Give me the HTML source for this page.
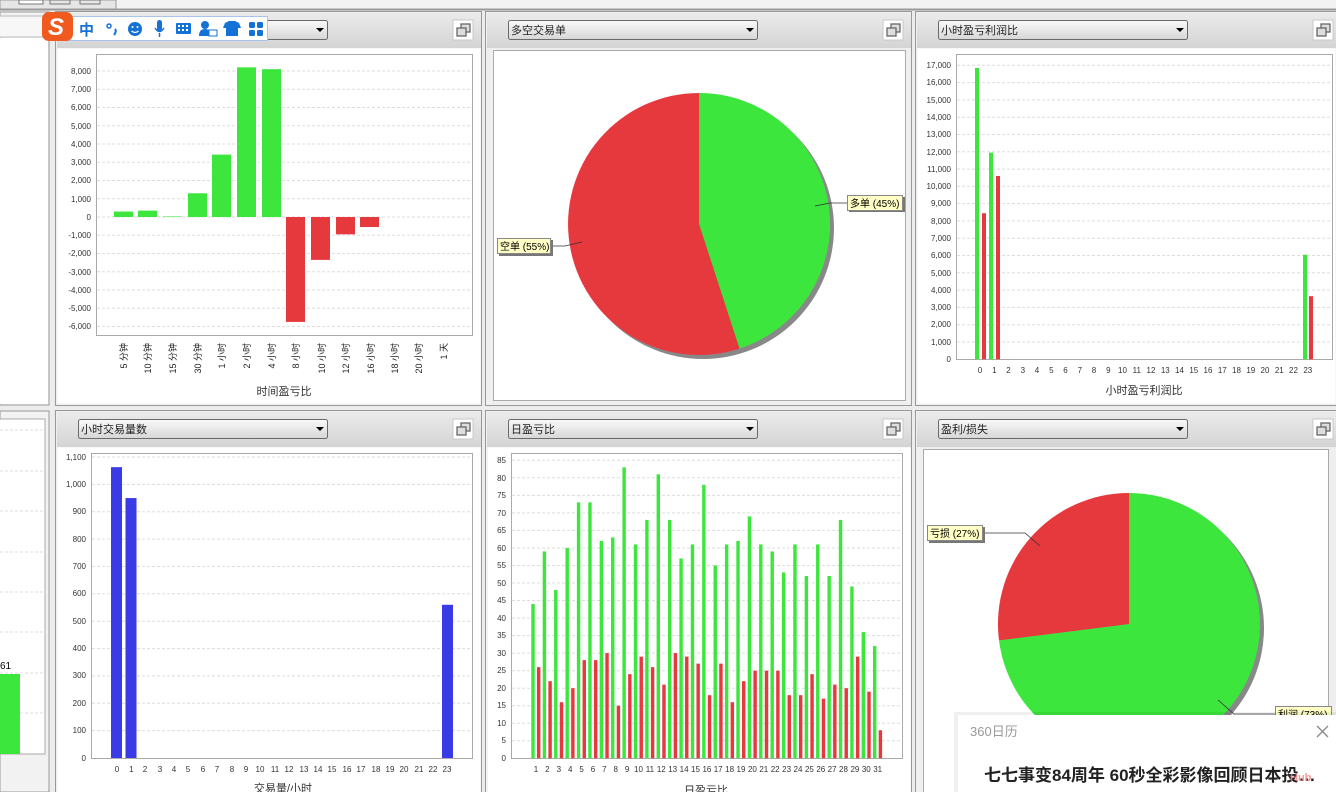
<!DOCTYPE html>
<html><head><meta charset="utf-8"><style>
html,body{margin:0;padding:0;width:1336px;height:792px;overflow:hidden;background:#ececec;}
svg{display:block;font-family:"Liberation Sans","Noto Sans CJK SC",sans-serif;}
</style></head><body>
<svg width="1336" height="792" viewBox="0 0 1336 792" xmlns="http://www.w3.org/2000/svg">
<defs>
<linearGradient id="hdr" x1="0" y1="0" x2="0" y2="1"><stop offset="0" stop-color="#ebebeb"/><stop offset="1" stop-color="#d4d4d4"/></linearGradient>
<linearGradient id="dd" x1="0" y1="0" x2="0" y2="1"><stop offset="0" stop-color="#fafafa"/><stop offset="1" stop-color="#d6d6d6"/></linearGradient>
<g id="restore"><rect x="0" y="0" width="20" height="20" fill="#fff" stroke="#c8c8c8"/><rect x="8" y="4" width="9" height="8" fill="#ddd" stroke="#666" stroke-width="1.3"/><rect x="4" y="8" width="9" height="8" fill="#ddd" stroke="#666" stroke-width="1.3"/></g>
</defs>
<!-- top strip -->
<rect x="0" y="0" width="1336" height="9" fill="#f2f2f2"/>
<rect x="0" y="0" width="116" height="9" fill="#e6e6e6" stroke="#999"/>
<rect x="19" y="0" width="24" height="4" fill="#fff" stroke="#777"/><rect x="50" y="0" width="20" height="4" fill="none" stroke="#777"/><rect x="80" y="0" width="20" height="4" fill="none" stroke="#777"/>
<line x1="0" y1="9.5" x2="1336" y2="9.5" stroke="#999" stroke-width="2"/>

<!-- left partial top -->
<rect x="0" y="12" width="49" height="393" fill="#f2f2f2" stroke="#999"/>
<rect x="-1" y="16" width="46" height="21" fill="#f7f7f7" stroke="#bbb"/>
<rect x="0" y="38" width="48" height="366" fill="#fff"/>
<!-- left partial bottom -->
<rect x="0" y="411" width="49" height="381" fill="#f2f2f2" stroke="#999"/>
<rect x="-1" y="419" width="46" height="335" fill="#fff" stroke="#aaa"/>
<g stroke="#ddd" stroke-dasharray="3,2"><line x1="0" y1="430" x2="45" y2="430"/><line x1="0" y1="471" x2="45" y2="471"/><line x1="0" y1="511" x2="45" y2="511"/><line x1="0" y1="552" x2="45" y2="552"/><line x1="0" y1="592" x2="45" y2="592"/><line x1="0" y1="632" x2="45" y2="632"/><line x1="0" y1="673" x2="45" y2="673"/><line x1="0" y1="713" x2="45" y2="713"/></g>
<rect x="0" y="674" width="20" height="80" fill="#3de63d"/>
<text x="0" y="669" font-size="10" fill="#000">61</text>

<!-- panel frames -->
<g fill="#efefef" stroke="#999">
<rect x="55.5" y="11.5" width="426" height="394"/><rect x="485.5" y="11.5" width="426" height="394"/><rect x="915.5" y="11.5" width="430" height="394"/>
<rect x="55.5" y="410.5" width="426" height="390"/><rect x="485.5" y="410.5" width="426" height="390"/><rect x="915.5" y="410.5" width="430" height="390"/>
</g>
<g fill="url(#hdr)">
<rect x="57" y="13" width="424" height="35"/><rect x="487" y="13" width="424" height="35"/><rect x="917" y="13" width="419" height="35"/>
<rect x="57" y="412" width="424" height="35"/><rect x="487" y="412" width="424" height="35"/><rect x="917" y="412" width="419" height="35"/>
</g>
<g stroke="#6a6a6a" fill="url(#dd)">
<rect x="78.5" y="20.5" width="249" height="19" rx="2"/><rect x="508.5" y="20.5" width="249" height="19" rx="2"/><rect x="938.5" y="20.5" width="249" height="19" rx="2"/>
<rect x="78.5" y="419.5" width="249" height="19" rx="2"/><rect x="508.5" y="419.5" width="249" height="19" rx="2"/><rect x="938.5" y="419.5" width="249" height="19" rx="2"/>
</g>
<g fill="#000"><path d="M316 28h8l-4 4z"/><path d="M746 28h8l-4 4z"/><path d="M1176 28h8l-4 4z"/><path d="M316 427h8l-4 4z"/><path d="M746 427h8l-4 4z"/><path d="M1176 427h8l-4 4z"/></g>
<g font-size="11" fill="#222"><text x="511" y="34">多空交易单</text><text x="941" y="34">小时盈亏利润比</text><text x="81" y="433">小时交易量数</text><text x="511" y="433">日盈亏比</text><text x="941" y="433">盈利/损失</text></g>
<use href="#restore" x="453" y="20"/><use href="#restore" x="883" y="20"/><use href="#restore" x="1313" y="20"/>
<use href="#restore" x="453" y="419"/><use href="#restore" x="883" y="419"/><use href="#restore" x="1313" y="419"/>

<!-- chart white areas -->
<g fill="#fff" stroke="#aaa">
<rect x="57.5" y="48.5" width="423" height="355" stroke="none"/>
<rect x="493.5" y="50.5" width="412" height="350"/>
<rect x="917.5" y="48.5" width="418" height="355" stroke="none"/>
<rect x="57.5" y="447.5" width="423" height="345" stroke="none"/>
<rect x="487.5" y="447.5" width="423" height="345" stroke="none"/>
<rect x="923.5" y="449.5" width="405" height="345"/>
</g>

<!-- PANEL 1 -->
<rect x="96.5" y="54.5" width="376" height="281" fill="#fff" stroke="#aaa"/>
<g stroke="#ddd" stroke-dasharray="3,2">
<line x1="97" y1="71" x2="472" y2="71"/><line x1="97" y1="89.25" x2="472" y2="89.25"/><line x1="97" y1="107.5" x2="472" y2="107.5"/><line x1="97" y1="125.75" x2="472" y2="125.75"/><line x1="97" y1="144" x2="472" y2="144"/><line x1="97" y1="162.25" x2="472" y2="162.25"/><line x1="97" y1="180.5" x2="472" y2="180.5"/><line x1="97" y1="198.75" x2="472" y2="198.75"/><line x1="97" y1="217" x2="472" y2="217"/><line x1="97" y1="235.25" x2="472" y2="235.25"/><line x1="97" y1="253.5" x2="472" y2="253.5"/><line x1="97" y1="271.75" x2="472" y2="271.75"/><line x1="97" y1="290" x2="472" y2="290"/><line x1="97" y1="308.25" x2="472" y2="308.25"/><line x1="97" y1="326.5" x2="472" y2="326.5"/>
</g>
<g font-size="8" fill="#333" text-anchor="end">
<text x="91" y="74">8,000</text><text x="91" y="92">7,000</text><text x="91" y="110">6,000</text><text x="91" y="129">5,000</text><text x="91" y="147">4,000</text><text x="91" y="165">3,000</text><text x="91" y="183">2,000</text><text x="91" y="202">1,000</text><text x="91" y="220">0</text><text x="91" y="238">-1,000</text><text x="91" y="256">-2,000</text><text x="91" y="275">-3,000</text><text x="91" y="293">-4,000</text><text x="91" y="311">-5,000</text><text x="91" y="329">-6,000</text>
</g>
<g transform="translate(0,217) scale(1,-0.01825)">
<g fill="#3de63d"><rect x="114" y="0" width="19" height="300"/><rect x="138" y="0" width="19" height="350"/><rect x="163" y="0" width="19" height="30"/><rect x="188" y="0" width="19" height="1300"/><rect x="212" y="0" width="19" height="3420"/><rect x="237" y="0" width="19" height="8200"/><rect x="262" y="0" width="19" height="8100"/></g>
<g fill="#e6393d"><rect x="286" y="-5750" width="19" height="5750"/><rect x="311" y="-2350" width="19" height="2350"/><rect x="336" y="-950" width="19" height="950"/><rect x="360" y="-550" width="19" height="550"/></g>
</g>
<g font-size="9" fill="#222" text-anchor="end">
<text transform="translate(127,343) rotate(-90)">5 分钟</text><text transform="translate(151,343) rotate(-90)">10 分钟</text><text transform="translate(176,343) rotate(-90)">15 分钟</text><text transform="translate(201,343) rotate(-90)">30 分钟</text><text transform="translate(225,343) rotate(-90)">1 小时</text><text transform="translate(250,343) rotate(-90)">2 小时</text><text transform="translate(275,343) rotate(-90)">4 小时</text><text transform="translate(299,343) rotate(-90)">8 小时</text><text transform="translate(325,343) rotate(-90)">10 小时</text><text transform="translate(349,343) rotate(-90)">12 小时</text><text transform="translate(374,343) rotate(-90)">16 小时</text><text transform="translate(398,343) rotate(-90)">18 小时</text><text transform="translate(422,343) rotate(-90)">20 小时</text><text transform="translate(447,343) rotate(-90)">1 天</text>
</g>
<text x="284" y="395" font-size="11" fill="#333" text-anchor="middle">时间盈亏比</text>

<!-- PANEL 2 pie -->
<circle cx="703" cy="228" r="131" fill="#888"/>
<path d="M699 224 L699 93 A131 131 0 0 1 739.5 348.6 Z" fill="#3de63d"/>
<path d="M699 224 L739.5 348.6 A131 131 0 1 1 699 93 Z" fill="#e6393d"/>
<polyline points="815,206 830,203 847,203" fill="none" stroke="#333" stroke-width="0.8"/>
<polyline points="582,242 565,246 551,246" fill="none" stroke="#333" stroke-width="0.8"/>
<rect x="849" y="197" width="56" height="15" fill="#777"/><rect x="847.5" y="195.5" width="55" height="15" fill="#ffffc6" stroke="#888"/>
<text x="850" y="207" font-size="10" fill="#000">多单 (45%)</text>
<rect x="499" y="240" width="54" height="16" fill="#777"/><rect x="497.5" y="238.5" width="53" height="15" fill="#ffffc6" stroke="#888"/>
<text x="500" y="250" font-size="10" fill="#000">空单 (55%)</text>

<!-- PANEL 3 -->
<rect x="956.5" y="54.5" width="376" height="305" fill="#fff" stroke="#aaa"/>
<g stroke="#ddd" stroke-dasharray="3,2">
<line x1="957" y1="65.3" x2="1330" y2="65.3"/><line x1="957" y1="82.6" x2="1330" y2="82.6"/><line x1="957" y1="99.9" x2="1330" y2="99.9"/><line x1="957" y1="117.2" x2="1330" y2="117.2"/><line x1="957" y1="134.5" x2="1330" y2="134.5"/><line x1="957" y1="151.8" x2="1330" y2="151.8"/><line x1="957" y1="169.1" x2="1330" y2="169.1"/><line x1="957" y1="186.3" x2="1330" y2="186.3"/><line x1="957" y1="203.6" x2="1330" y2="203.6"/><line x1="957" y1="220.9" x2="1330" y2="220.9"/><line x1="957" y1="238.2" x2="1330" y2="238.2"/><line x1="957" y1="255.5" x2="1330" y2="255.5"/><line x1="957" y1="272.8" x2="1330" y2="272.8"/><line x1="957" y1="290.1" x2="1330" y2="290.1"/><line x1="957" y1="307.4" x2="1330" y2="307.4"/><line x1="957" y1="324.7" x2="1330" y2="324.7"/><line x1="957" y1="342" x2="1330" y2="342"/>
</g>
<g font-size="8" fill="#333" text-anchor="end">
<text x="951" y="68">17,000</text><text x="951" y="85">16,000</text><text x="951" y="103">15,000</text><text x="951" y="120">14,000</text><text x="951" y="137">13,000</text><text x="951" y="155">12,000</text><text x="951" y="172">11,000</text><text x="951" y="189">10,000</text><text x="951" y="206">9,000</text><text x="951" y="224">8,000</text><text x="951" y="241">7,000</text><text x="951" y="258">6,000</text><text x="951" y="276">5,000</text><text x="951" y="293">4,000</text><text x="951" y="310">3,000</text><text x="951" y="327">2,000</text><text x="951" y="345">1,000</text><text x="951" y="362">0</text>
</g>
<g transform="translate(0,359.3) scale(1,-0.01729)">
<g fill="#3de63d"><rect x="975" y="0" width="4" height="16850"/><rect x="989" y="0" width="4" height="11950"/><rect x="1303" y="0" width="4" height="6050"/></g>
<g fill="#e6393d"><rect x="982" y="0" width="4" height="8450"/><rect x="996" y="0" width="4" height="10600"/><rect x="1309" y="0" width="4" height="3650"/></g>
</g>
<g font-size="8" fill="#333" text-anchor="middle">
<text x="980" y="373">0</text><text x="994.3" y="373">1</text><text x="1008.5" y="373">2</text><text x="1022.8" y="373">3</text><text x="1037" y="373">4</text><text x="1051.3" y="373">5</text><text x="1065.5" y="373">6</text><text x="1079.8" y="373">7</text><text x="1094" y="373">8</text><text x="1108.3" y="373">9</text><text x="1122.5" y="373">10</text><text x="1136.8" y="373">11</text><text x="1151" y="373">12</text><text x="1165.3" y="373">13</text><text x="1179.5" y="373">14</text><text x="1193.8" y="373">15</text><text x="1208" y="373">16</text><text x="1222.3" y="373">17</text><text x="1236.5" y="373">18</text><text x="1250.8" y="373">19</text><text x="1265" y="373">20</text><text x="1279.3" y="373">21</text><text x="1293.5" y="373">22</text><text x="1307.8" y="373">23</text>
</g>
<text x="1144" y="394" font-size="11" fill="#333" text-anchor="middle">小时盈亏利润比</text>

<!-- BOTTOM PANEL 1 -->
<rect x="91.5" y="453.5" width="381" height="305" fill="#fff" stroke="#aaa"/>
<g stroke="#ddd" stroke-dasharray="3,2">
<line x1="92" y1="457" x2="472" y2="457"/><line x1="92" y1="484.4" x2="472" y2="484.4"/><line x1="92" y1="511.8" x2="472" y2="511.8"/><line x1="92" y1="539.1" x2="472" y2="539.1"/><line x1="92" y1="566.5" x2="472" y2="566.5"/><line x1="92" y1="593.8" x2="472" y2="593.8"/><line x1="92" y1="621.2" x2="472" y2="621.2"/><line x1="92" y1="648.6" x2="472" y2="648.6"/><line x1="92" y1="675.9" x2="472" y2="675.9"/><line x1="92" y1="703.3" x2="472" y2="703.3"/><line x1="92" y1="730.6" x2="472" y2="730.6"/>
</g>
<g font-size="8" fill="#333" text-anchor="end">
<text x="86" y="460">1,100</text><text x="86" y="487">1,000</text><text x="86" y="514">900</text><text x="86" y="542">800</text><text x="86" y="569">700</text><text x="86" y="596">600</text><text x="86" y="624">500</text><text x="86" y="651">400</text><text x="86" y="678">300</text><text x="86" y="706">200</text><text x="86" y="733">100</text><text x="86" y="761">0</text>
</g>
<g transform="translate(0,758) scale(1,-0.2736)" fill="#3a3ae6">
<rect x="111" y="0" width="11" height="1063"/><rect x="125.5" y="0" width="11" height="950"/><rect x="442" y="0" width="11" height="560"/>
</g>
<g font-size="8" fill="#333" text-anchor="middle">
<text x="117" y="772">0</text><text x="131.3" y="772">1</text><text x="145" y="772">2</text><text x="160" y="772">3</text><text x="174" y="772">4</text><text x="188" y="772">5</text><text x="203" y="772">6</text><text x="217" y="772">7</text><text x="232" y="772">8</text><text x="246" y="772">9</text><text x="260" y="772">10</text><text x="275" y="772">11</text><text x="289" y="772">12</text><text x="304" y="772">13</text><text x="318" y="772">14</text><text x="332" y="772">15</text><text x="347" y="772">16</text><text x="361" y="772">17</text><text x="376" y="772">18</text><text x="390" y="772">19</text><text x="404" y="772">20</text><text x="419" y="772">21</text><text x="433" y="772">22</text><text x="447" y="772">23</text>
</g>
<text x="283" y="792" font-size="11" fill="#333" text-anchor="middle">交易量/小时</text>

<!-- BOTTOM PANEL 2 -->
<rect x="511.5" y="453.5" width="391" height="305" fill="#fff" stroke="#aaa"/>
<g stroke="#ddd" stroke-dasharray="3,2">
<line x1="512" y1="460.3" x2="902" y2="460.3"/><line x1="512" y1="477.8" x2="902" y2="477.8"/><line x1="512" y1="495.4" x2="902" y2="495.4"/><line x1="512" y1="512.9" x2="902" y2="512.9"/><line x1="512" y1="530.4" x2="902" y2="530.4"/><line x1="512" y1="548" x2="902" y2="548"/><line x1="512" y1="565.5" x2="902" y2="565.5"/><line x1="512" y1="583" x2="902" y2="583"/><line x1="512" y1="600.5" x2="902" y2="600.5"/><line x1="512" y1="618.1" x2="902" y2="618.1"/><line x1="512" y1="635.6" x2="902" y2="635.6"/><line x1="512" y1="653.1" x2="902" y2="653.1"/><line x1="512" y1="670.7" x2="902" y2="670.7"/><line x1="512" y1="688.2" x2="902" y2="688.2"/><line x1="512" y1="705.7" x2="902" y2="705.7"/><line x1="512" y1="723.2" x2="902" y2="723.2"/><line x1="512" y1="740.8" x2="902" y2="740.8"/>
</g>
<g font-size="8" fill="#333" text-anchor="end">
<text x="506" y="463">85</text><text x="506" y="481">80</text><text x="506" y="498">75</text><text x="506" y="516">70</text><text x="506" y="533">65</text><text x="506" y="551">60</text><text x="506" y="568">55</text><text x="506" y="586">50</text><text x="506" y="603">45</text><text x="506" y="621">40</text><text x="506" y="638">35</text><text x="506" y="656">30</text><text x="506" y="673">25</text><text x="506" y="691">20</text><text x="506" y="708">15</text><text x="506" y="726">10</text><text x="506" y="743">5</text><text x="506" y="761">0</text>
</g>
<g transform="translate(531.3,758.3) scale(11.39,-3.506)">
<g fill="#3de63d">
<rect x="0" y="0" width=".3" height="44"/><rect x="1" y="0" width=".3" height="59"/><rect x="2" y="0" width=".3" height="48"/><rect x="3" y="0" width=".3" height="60"/><rect x="4" y="0" width=".3" height="73"/><rect x="5" y="0" width=".3" height="73"/><rect x="6" y="0" width=".3" height="62"/><rect x="7" y="0" width=".3" height="63"/><rect x="8" y="0" width=".3" height="83"/><rect x="9" y="0" width=".3" height="61"/><rect x="10" y="0" width=".3" height="68"/><rect x="11" y="0" width=".3" height="81"/><rect x="12" y="0" width=".3" height="68"/><rect x="13" y="0" width=".3" height="57"/><rect x="14" y="0" width=".3" height="61"/><rect x="15" y="0" width=".3" height="78"/><rect x="16" y="0" width=".3" height="55"/><rect x="17" y="0" width=".3" height="61"/><rect x="18" y="0" width=".3" height="62"/><rect x="19" y="0" width=".3" height="69"/><rect x="20" y="0" width=".3" height="61"/><rect x="21" y="0" width=".3" height="59"/><rect x="22" y="0" width=".3" height="53"/><rect x="23" y="0" width=".3" height="61"/><rect x="24" y="0" width=".3" height="52"/><rect x="25" y="0" width=".3" height="61"/><rect x="26" y="0" width=".3" height="52"/><rect x="27" y="0" width=".3" height="68"/><rect x="28" y="0" width=".3" height="49"/><rect x="29" y="0" width=".3" height="36"/><rect x="30" y="0" width=".3" height="32"/>
</g>
<g fill="#e6393d">
<rect x=".5" y="0" width=".3" height="26"/><rect x="1.5" y="0" width=".3" height="22"/><rect x="2.5" y="0" width=".3" height="16"/><rect x="3.5" y="0" width=".3" height="20"/><rect x="4.5" y="0" width=".3" height="28"/><rect x="5.5" y="0" width=".3" height="28"/><rect x="6.5" y="0" width=".3" height="30"/><rect x="7.5" y="0" width=".3" height="15"/><rect x="8.5" y="0" width=".3" height="24"/><rect x="9.5" y="0" width=".3" height="29"/><rect x="10.5" y="0" width=".3" height="26"/><rect x="11.5" y="0" width=".3" height="21"/><rect x="12.5" y="0" width=".3" height="30"/><rect x="13.5" y="0" width=".3" height="29"/><rect x="14.5" y="0" width=".3" height="27"/><rect x="15.5" y="0" width=".3" height="18"/><rect x="16.5" y="0" width=".3" height="27"/><rect x="17.5" y="0" width=".3" height="16"/><rect x="18.5" y="0" width=".3" height="22"/><rect x="19.5" y="0" width=".3" height="25"/><rect x="20.5" y="0" width=".3" height="25"/><rect x="21.5" y="0" width=".3" height="25"/><rect x="22.5" y="0" width=".3" height="18"/><rect x="23.5" y="0" width=".3" height="18"/><rect x="24.5" y="0" width=".3" height="24"/><rect x="25.5" y="0" width=".3" height="17"/><rect x="26.5" y="0" width=".3" height="21"/><rect x="27.5" y="0" width=".3" height="20"/><rect x="28.5" y="0" width=".3" height="29"/><rect x="29.5" y="0" width=".3" height="19"/><rect x="30.5" y="0" width=".3" height="8"/>
</g>
</g>
<g font-size="8" fill="#333" text-anchor="middle">
<text x="536" y="772">1</text><text x="547.4" y="772">2</text><text x="558.8" y="772">3</text><text x="570.2" y="772">4</text><text x="581.6" y="772">5</text><text x="593" y="772">6</text><text x="604.3" y="772">7</text><text x="615.7" y="772">8</text><text x="627.1" y="772">9</text><text x="638.5" y="772">10</text><text x="649.9" y="772">11</text><text x="661.3" y="772">12</text><text x="672.7" y="772">13</text><text x="684.1" y="772">14</text><text x="695.5" y="772">15</text><text x="706.9" y="772">16</text><text x="718.2" y="772">17</text><text x="729.6" y="772">18</text><text x="741" y="772">19</text><text x="752.4" y="772">20</text><text x="763.8" y="772">21</text><text x="775.2" y="772">22</text><text x="786.6" y="772">23</text><text x="798" y="772">24</text><text x="809.4" y="772">25</text><text x="820.8" y="772">26</text><text x="832.1" y="772">27</text><text x="843.5" y="772">28</text><text x="854.9" y="772">29</text><text x="866.3" y="772">30</text><text x="877.7" y="772">31</text>
</g>
<text x="706" y="794" font-size="11" fill="#333" text-anchor="middle">日盈亏比</text>

<!-- BOTTOM PANEL 3 pie -->
<circle cx="1133" cy="628" r="131" fill="#888"/>
<path d="M1129 624 L1129 493 A131 131 0 1 1 999 640.4 Z" fill="#3de63d"/>
<path d="M1129 624 L999 640.4 A131 131 0 0 1 1129 493 Z" fill="#e6393d"/>
<polyline points="1040,546 1025,533 983,533" fill="none" stroke="#333" stroke-width="0.8"/>
<polyline points="1218,700 1234,714 1276,714" fill="none" stroke="#333" stroke-width="0.8"/>
<rect x="929" y="527" width="56" height="16" fill="#777"/><rect x="927.5" y="525.5" width="55" height="15" fill="#ffffc6" stroke="#888"/>
<text x="930" y="537" font-size="10" fill="#000">亏损 (27%)</text>
<rect x="1275.5" y="706.5" width="56" height="15" fill="#ffffc6" stroke="#888"/>
<text x="1278" y="718" font-size="10" fill="#000">利润 (73%)</text>

<!-- 360 popup -->
<rect x="954" y="712" width="382" height="84" fill="#000" opacity="0.06"/>
<rect x="958" y="715" width="378" height="80" fill="#fff"/>
<text x="970" y="736" font-size="13" fill="#999">360日历</text>
<path d="M1317 726 L1328 737 M1328 726 L1317 737" stroke="#888" stroke-width="1.3"/>
<text x="984" y="781" font-size="17" font-weight="bold" fill="#222">七七事变84周年 60秒全彩影像回顾日本投…</text>
<text x="1290" y="781" font-size="11" font-weight="bold" fill="#f08080" opacity="0.8">Hub</text>

<!-- sogou toolbar -->
<rect x="58.5" y="16.5" width="209" height="24" fill="#fff" stroke="#a9c4e8"/>
<rect x="42" y="12" width="31" height="29" rx="7" fill="#f05a1e"/>
<text x="48" y="35" font-size="24" font-weight="bold" fill="#fff" font-style="italic">S</text>
<g fill="#1471d6">
<text x="79" y="35" font-size="15" font-weight="bold">中</text>
<circle cx="109" cy="26" r="2" fill="none" stroke="#1471d6" stroke-width="1.5"/><path d="M115 29 q2 2 -1 6" stroke="#1471d6" stroke-width="2" fill="none"/>
<circle cx="135" cy="29" r="7"/><circle cx="132.5" cy="27" r="1" fill="#fff"/><circle cx="137.5" cy="27" r="1" fill="#fff"/><path d="M131.5 31 q3.5 3 7 0" stroke="#fff" fill="none" stroke-width="1.2"/>
<rect x="157" y="20" width="5" height="11" rx="2.5"/><path d="M155 28 q4.5 7 9 0 M159.5 33 v4" stroke="#1471d6" fill="none" stroke-width="1.5"/>
<rect x="176" y="23" width="15" height="11" rx="1"/><g fill="#fff"><rect x="178" y="25" width="2" height="2"/><rect x="182" y="25" width="2" height="2"/><rect x="186" y="25" width="2" height="2"/><rect x="178" y="29" width="2" height="2"/><rect x="182" y="29" width="2" height="2"/><rect x="186" y="29" width="2" height="2"/></g>
<circle cx="205" cy="25" r="4"/><path d="M199 36 q0 -7 6 -7 q6 0 6 7z"/><rect x="209" y="30" width="8" height="6" fill="#fff" stroke="#1471d6"/>
<path d="M225 23 l4 -2 h6 l4 2 l2 5 h-3 v8 h-12 v-8 h-3z"/>
<rect x="249" y="22" width="6" height="6" rx="1.5"/><rect x="257" y="22" width="6" height="6" rx="1.5"/><rect x="249" y="30" width="6" height="6" rx="1.5"/><rect x="257" y="30" width="6" height="6" rx="1.5"/>
</g>
</svg>
</body></html>
